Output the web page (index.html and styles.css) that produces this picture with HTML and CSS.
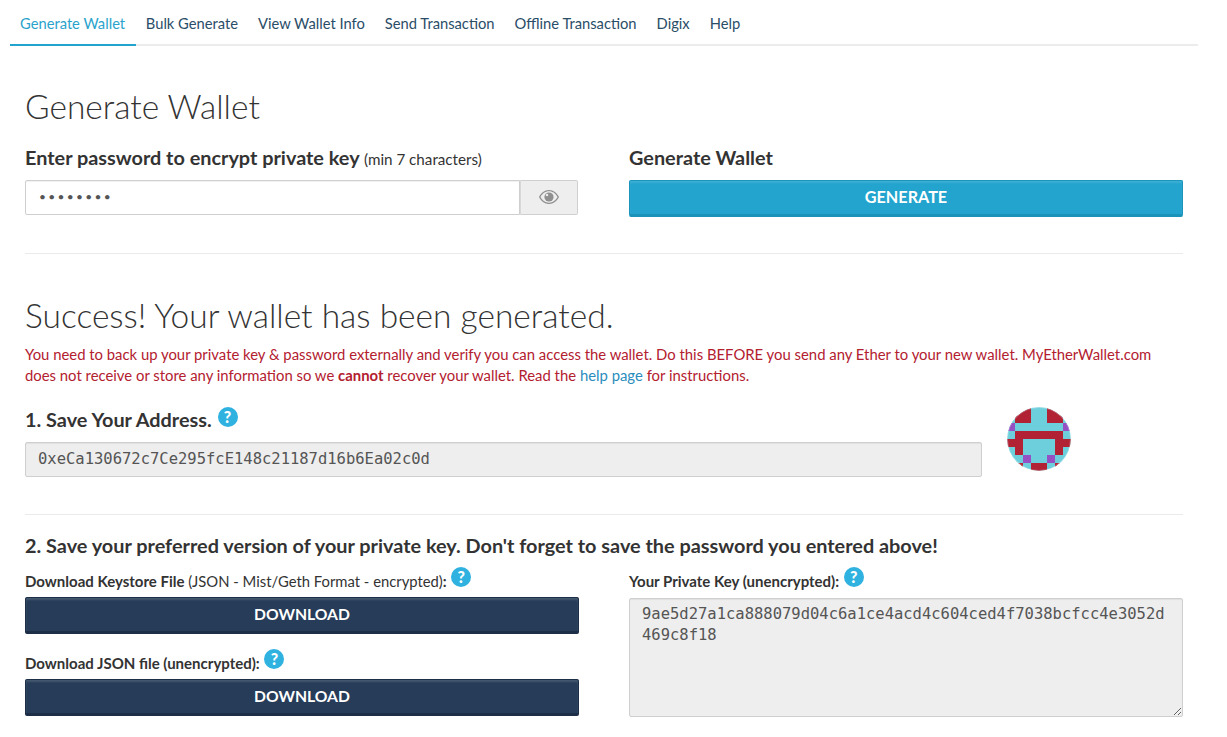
FILE: index.html
```
<!DOCTYPE html>
<html lang="en">
<head>
<meta charset="utf-8">
<title>Generate Wallet</title>
<link rel="stylesheet" href="styles.css">
</head>
<body>
<nav class="tabs">
  <a class="tab tab-active">Generate Wallet</a>
  <a class="tab">Bulk Generate</a>
  <a class="tab">View Wallet Info</a>
  <a class="tab">Send Transaction</a>
  <a class="tab">Offline Transaction</a>
  <a class="tab">Digix</a>
  <a class="tab">Help</a>
</nav>
<main class="page">
  <section class="generate">
    <h1 class="title title-top">Generate Wallet</h1>
    <div class="columns">
      <div>
        <h4 class="field-title">Enter password to encrypt private key <small class="hint">(min 7 characters)</small></h4>
        <div class="input-group">
          <input class="input input-pass" type="password" value="password">
          <span class="addon">
            <svg class="eye" viewBox="0 0 20 14" width="20" height="14"><path fill="#8f8f8f" d="M10 0C5.500 0 2 3 0 7c2 4 5.500 7 10 7s8-3 10-7c-2-4-5.500-7-10-7zm0 1.300c3.800 0 6.800 2.400 8.500 5.700-1.700 3.300-4.700 5.700-8.500 5.700S3.200 10.300 1.500 7C3.200 3.700 6.200 1.300 10 1.300z"/><circle cx="10" cy="7" r="4.600" fill="#8f8f8f"/><circle cx="8" cy="5" r="1.300" fill="#e8e8e8"/></svg>
          </span>
        </div>
      </div>
      <div>
        <h4 class="field-title">Generate Wallet</h4>
        <button class="btn btn-primary">GENERATE</button>
      </div>
    </div>
  </section>
  <hr class="rule rule-first">
  <section>
    <h1 class="title">Success! Your wallet has been generated.</h1>
    <p class="warning">You need to back up your private key &amp; password externally and verify you can access the wallet. Do this BEFORE you send any Ether to your new wallet. MyEtherWallet.com does not receive or store any information so we <strong>cannot</strong> recover your wallet. Read the <a class="link">help page</a> for instructions.</p>
    <div class="address-row">
      <div class="address-main">
        <h4 class="field-title save-title">1. Save Your Address. <span class="help">?</span></h4>
        <input class="input input-mono" type="text" readonly value="0xeCa130672c7Ce295fcE148c21187d16b6Ea02c0d">
      </div>
      <svg class="identicon" viewBox="0 0 8 8" width="64" height="64">
        <defs><clipPath id="round"><circle cx="4" cy="4" r="4"/></clipPath></defs>
        <g clip-path="url(#round)">
          <rect width="8" height="8" fill="#6dcfdc"/>
          <path fill="#b02234" d="M1 0h2v2H1zM5 0h2v2H5zM1 3h6v1H1zM0 4h2v1H0zM6 4h2v1H6zM1 5h1v1H1zM6 5h1v1H6zM3 7h2v1H3zM1 7h1v1H1zM6 7h1v1H6z"/>
          <path fill="#9550c4" d="M0 2h1v1H0zM7 2h1v1H7zM2 6h1v1H2zM5 6h1v1H5z"/>
          <circle cx="4" cy="4" r="3.950" fill="none" stroke="#fff" stroke-opacity=".3" stroke-width=".15"/>
        </g>
      </svg>
    </div>
  </section>
  <hr class="rule rule-second">
  <section>
    <h4 class="field-title save-second">2. Save your preferred version of your private key. Don't forget to save the password you entered above!</h4>
    <div class="columns">
      <div>
        <h5 class="label">Download Keystore File <span class="label-light">(JSON - Mist/Geth Format - encrypted)</span>: <span class="help help-sm">?</span></h5>
        <button class="btn btn-dark">DOWNLOAD</button>
        <h5 class="label label-next">Download JSON file (unencrypted): <span class="help help-sm">?</span></h5>
        <button class="btn btn-dark">DOWNLOAD</button>
      </div>
      <div>
        <h5 class="label">Your Private Key (unencrypted): <span class="help help-sm">?</span></h5>
        <textarea class="input input-mono key" readonly>9ae5d27a1ca888079d04c6a1ce4acd4c604ced4f7038bcfcc4e3052d469c8f18</textarea>
      </div>
    </div>
  </section>
</main>
</body>
</html>
```
FILE: styles.css
```
* { box-sizing: border-box; }
html, body { margin: 0; padding: 0; background: #fff; }
body { font-family: Lato, "Liberation Sans", sans-serif; color: #333; font-size: 15px; overflow: hidden; height: 737px; }
.tabs { display: flex; margin: 0 29px 0 10px; height: 46px; border-bottom: 2px solid #ececec; }
.tab { height: 46px; padding: 0 10px; line-height: 47px; font-size: 14.730px; font-weight: 400; color: #2a4d68; border-bottom: 2px solid transparent; white-space: nowrap; }
.tab-active { color: #2aa3cc; border-bottom-color: #21a4ce; padding-right: 10.700px; }
.page { width: 1158px; margin-left: 25px; }
.title { margin: 0; font-size: 33.500px; font-weight: 300; line-height: 40px; color: #333; }
.title-top { margin-top: 40px; }
.columns { display: grid; grid-template-columns: 554px 554px; column-gap: 50px; }
.generate .columns { margin-top: 19px; }
.field-title { margin: 0; font-size: 19.850px; font-weight: 700; line-height: 24px; height: 24px; color: #333; white-space: nowrap; }
.hint { font-size: 15.200px; font-weight: 400; line-height: 1; }
.input-group { display: flex; margin: 11px 1px 0 0; height: 35px; }
.input { flex: 1; min-width: 0; height: 35px; padding: 0 12px; border: 1px solid #cfcfcf; border-radius: 2px 0 0 2px; background: #fff; color: #555; font-size: 15px; font-family: Lato, sans-serif; outline: none; box-shadow: inset 0 1px 1px rgba(0,0,0,.06); }
.input-pass { font-size: 12px; letter-spacing: 2.300px; padding: 0 0 3px 13px; }
.addon { width: 58px; padding-bottom: 2px; display: flex; align-items: center; justify-content: center; background: #eee; border: 1px solid #cfcfcf; border-left: 1px solid #d8d8d8; border-radius: 0 2px 2px 0; }
.btn { display: block; width: 100%; height: 37px; margin-top: 11px; border: 1px solid transparent; border-radius: 2px; font-family: Lato, sans-serif; font-weight: 700; color: #fff; padding: 0 0 2px; }
.btn-primary { font-size: 16.200px; background: #22a4ce; border-color: #1d94bb; border-bottom: 3px solid #1b92b8; box-shadow: inset 0 2px 2px rgba(255,255,255,.12); }
.btn-dark { font-size: 15.700px; background: #263c58; border-color: #1d2f46; border-bottom: 3px solid #1d2f46; box-shadow: inset 0 2px 2px rgba(255,255,255,.14); margin-top: 6px; }
.rule { margin: 0; border: 0; border-top: 1px solid #eaeaea; }
.rule-first { margin-top: 36px; margin-bottom: 41px; }
.rule-second { margin-top: 37px; margin-bottom: 18px; }
.warning { margin: 9px 0 0; font-size: 14.860px; line-height: 21px; color: #b3202f; }
.warning strong { font-weight: 700; }
.link { color: #2a8dbd; }
.address-row { display: flex; align-items: flex-start; margin-top: 17px; }
.address-main { width: 957px; }
.save-title { line-height: 32px; height: 32px; }
.input-mono { font-family: "DejaVu Sans Mono", monospace; font-size: 15.500px; background: #eee; color: #555; border-radius: 2px; }
.address-main .input-mono { display: block; width: 100%; margin-top: 7px; padding-bottom: 2px; }
.identicon { margin: 4px 0 0 25px; border-radius: 50%; flex: none; }
.help { display: inline-block; width: 20px; height: 20px; margin-left: 1px; border-radius: 50%; background: #2fb2e0; color: #fff; font-size: 16px; font-weight: 900; line-height: 20px; text-align: center; vertical-align: 4px; }
.help-sm { vertical-align: 4px; }
.save-second { line-height: 24px; margin-bottom: 10px; }
.label { margin: 0; font-size: 15px; font-weight: 700; line-height: 24px; color: #333; height: 24px; white-space: nowrap; }
.label-light { font-weight: 400; font-size: 14.800px; }
.label-next { margin-top: 15px; }
.key { display: block; width: 100%; height: 119px; margin-top: 7px; padding: 5px 12px; line-height: 21px; resize: vertical; flex: none; word-break: break-all; }
```
